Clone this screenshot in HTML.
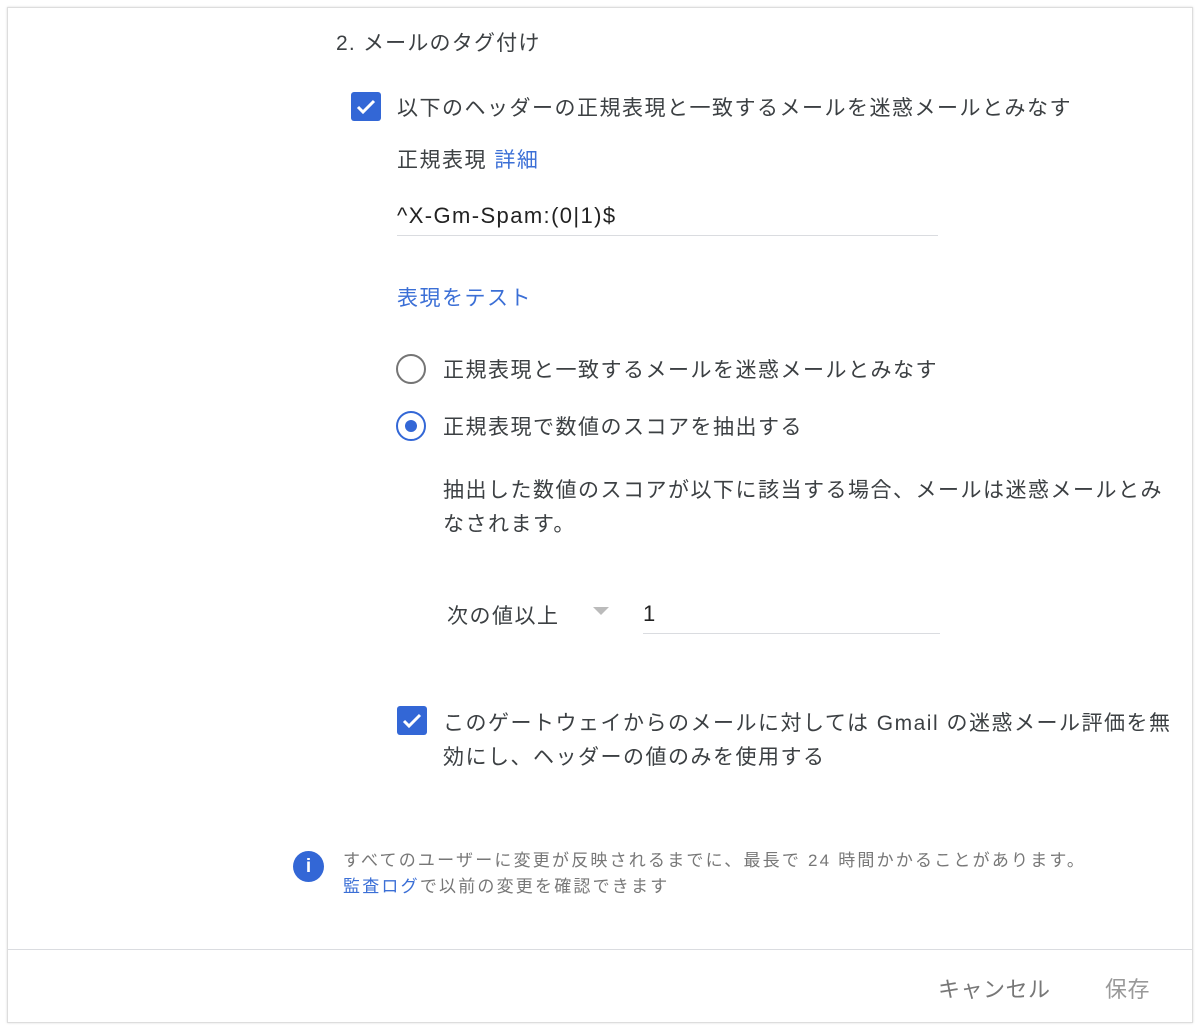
<!DOCTYPE html>
<html><head><meta charset="utf-8"><style>
*{margin:0;padding:0;box-sizing:border-box}
body{width:1200px;height:1030px;background:#fff;font-family:"Liberation Sans","Noto Sans CJK JP",sans-serif;color:#3c4043;position:relative;overflow:hidden}
.card{position:absolute;left:7px;top:7px;width:1186px;height:1016px;border:1px solid #ddd;box-shadow:0 0 2px rgba(0,0,0,.15)}
.t{position:absolute;white-space:nowrap;font-size:21px;line-height:1;letter-spacing:1.5px}
.blue{color:#3b6fd6}
.cb{position:absolute;width:30px;height:29px;background:#3367d6;border-radius:3px}
.rad{position:absolute;width:30px;height:30px;border-radius:50%;border:2px solid #757575}
.line{position:absolute;height:1px;background:#dadce0}
.s{font-size:17px;color:#777;letter-spacing:2.2px}
</style></head><body>
<div class="card"></div>
<div class="t" style="left:336px;top:33px;letter-spacing:1.2px">2. メールのタグ付け</div>
<div class="cb" style="left:351px;top:92px"><svg width="30" height="29" viewBox="0 0 30 29"><path d="M7 15l5 5 11-11" stroke="#fff" stroke-width="3" fill="none"/></svg></div>
<div class="t" style="left:397px;top:98px">以下のヘッダーの正規表現と一致するメールを迷惑メールとみなす</div>
<div class="t" style="left:397px;top:150px">正規表現 <span class="blue">詳細</span></div>
<div class="t" style="left:397px;top:205px;font-size:22px;color:#222;letter-spacing:1.4px">^X-Gm-Spam:(0|1)$</div>
<div class="line" style="left:397px;top:235px;width:541px"></div>
<div class="t blue" style="left:397px;top:288px">表現をテスト</div>
<div class="rad" style="left:396px;top:354px"></div>
<div class="t" style="left:443px;top:360px">正規表現と一致するメールを迷惑メールとみなす</div>
<div class="rad" style="left:396px;top:411px;border-color:#3367d6"><div style="position:absolute;left:7px;top:7px;width:12px;height:12px;border-radius:50%;background:#3367d6"></div></div>
<div class="t" style="left:443px;top:417px">正規表現で数値のスコアを抽出する</div>
<div class="t" style="left:443px;top:480px">抽出した数値のスコアが以下に該当する場合、メールは迷惑メールとみ</div>
<div class="t" style="left:443px;top:514px">なされます。</div>
<div class="t" style="left:447px;top:606px">次の値以上</div>
<svg style="position:absolute;left:593px;top:607px" width="16" height="9"><path d="M0 0h16L8 8z" fill="#bbb"/></svg>
<div class="t" style="left:643px;top:603px;font-size:22px;color:#222">1</div>
<div class="line" style="left:643px;top:633px;width:297px"></div>
<div class="cb" style="left:397px;top:706px"><svg width="30" height="29" viewBox="0 0 30 29"><path d="M7 15l5 5 11-11" stroke="#fff" stroke-width="3" fill="none"/></svg></div>
<div class="t" style="left:443px;top:713px">このゲートウェイからのメールに対しては Gmail の迷惑メール評価を無</div>
<div class="t" style="left:443px;top:747px">効にし、ヘッダーの値のみを使用する</div>
<div style="position:absolute;left:293px;top:851px;width:31px;height:31px;border-radius:50%;background:#3367d6;color:#fff;font-weight:bold;font-size:19px;text-align:center;line-height:31px">i</div>
<div class="t s" style="left:343px;top:852px">すべてのユーザーに変更が反映されるまでに、最長で 24 時間かかることがあります。</div>
<div class="t s" style="left:343px;top:878px"><span class="blue">監査ログ</span>で以前の変更を確認できます</div>
<div class="line" style="left:8px;top:949px;width:1184px"></div>
<div class="t" style="left:938px;top:979px;font-size:22px;color:#777;letter-spacing:0.5px">キャンセル</div>
<div class="t" style="left:1105px;top:979px;font-size:22px;color:#999;letter-spacing:0.5px">保存</div>
</body></html>
